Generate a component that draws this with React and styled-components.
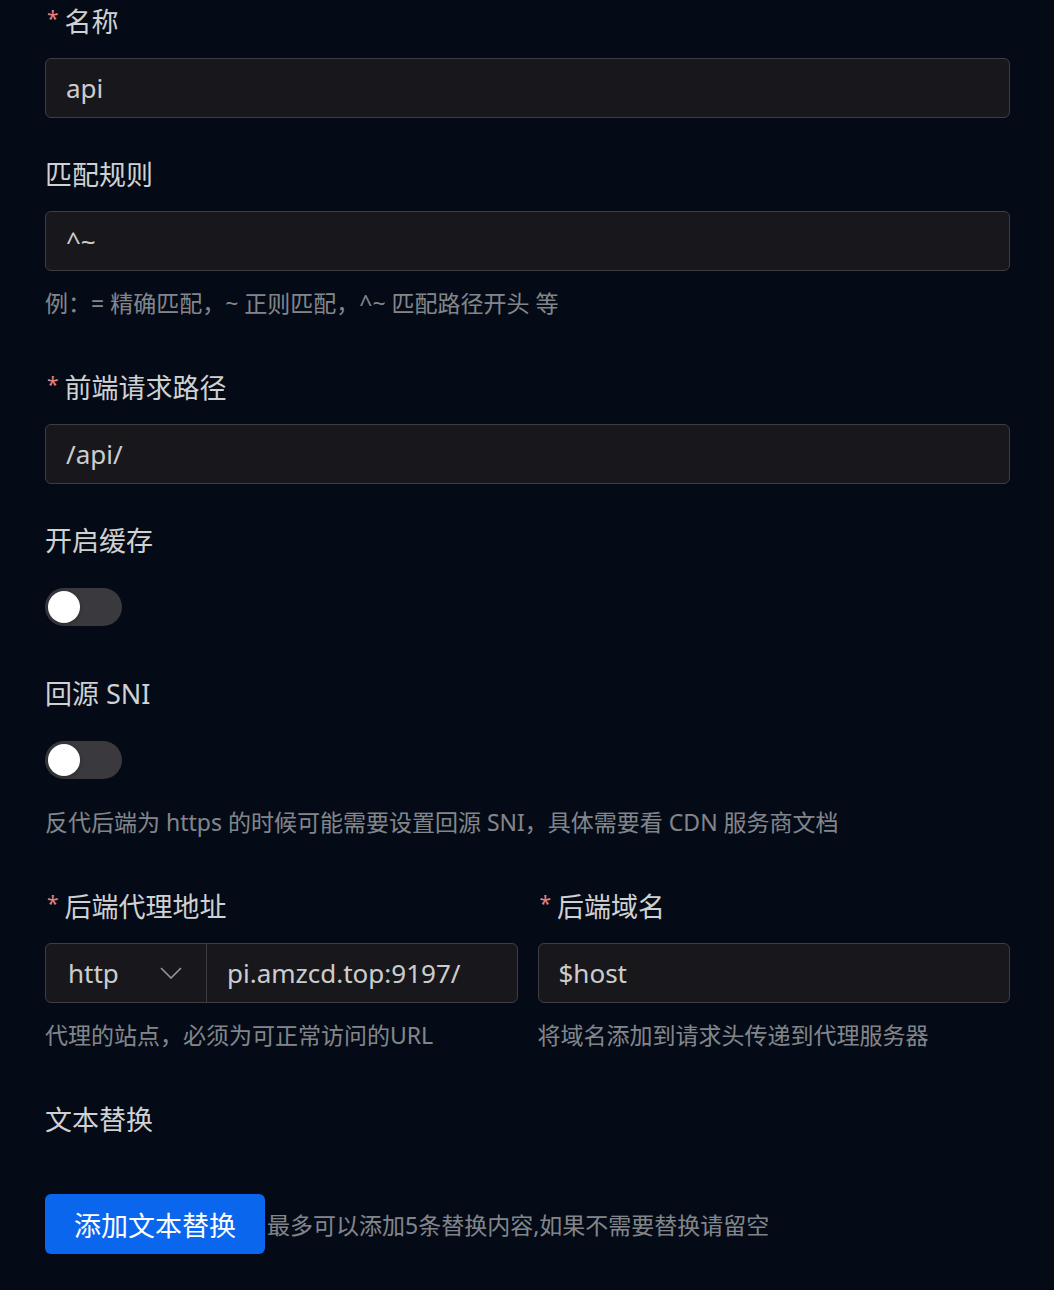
import React from "react";
import styled, { createGlobalStyle } from "styled-components";

const GlobalStyle = createGlobalStyle`
  html, body {
    margin: 0;
    padding: 0;
    background-color: #040b16;
  }

  body {
    font-family: "Noto Sans", "Noto Sans CJK SC", sans-serif;
    color: rgba(255, 255, 255, 0.82);
  }
`;

const Form = styled.form`
  padding: 0 44px 36px 45px;
  min-height: 1290px;
  box-sizing: border-box;
`;

const Row = styled.div`
  display: grid;
  grid-template-columns: 1fr 1fr;
  column-gap: 20px;
`;

const Item = styled.div`
  display: flex;
  flex-direction: column;
`;

const Label = styled.label`
  display: flex;
  align-items: center;
  height: 40px;
  margin-bottom: 18px;
  font-size: 27px;
  color: rgba(255, 255, 255, 0.82);
  white-space: nowrap;

  &::before {
    content: ${(props) => (props.required ? '"*"' : "none")};
    color: #e88080;
    font-size: 21px;
    margin-right: 6px;
    margin-left: 2px;
    align-self: flex-start;
    line-height: 36px;
  }
`;

const Blank = styled.div`
  min-height: 60px;
  display: flex;
  align-items: center;
`;

const Feedback = styled.div`
  box-sizing: border-box;
  min-height: 35px;
  padding: ${(props) => (props.text ? "17px 0 48px" : "0")};
  line-height: 30px;
  font-size: 23px;
  color: rgba(255, 255, 255, 0.52);
  white-space: nowrap;
`;

const InputBox = styled.div`
  flex: 1;
  height: 60px;
  box-sizing: border-box;
  display: flex;
  align-items: center;
  padding: 0 20px;
  background-color: #18181c;
  border: 1px solid #3d3e43;
  border-radius: 6px;
  font-size: 26px;
  color: rgba(255, 255, 255, 0.8);
`;

const Group = styled.div`
  flex: 1;
  display: flex;
  height: 60px;
  box-sizing: border-box;
  background-color: #18181c;
  border: 1px solid #3d3e43;
  border-radius: 6px;
  overflow: hidden;
`;

const SelectPart = styled.div`
  width: 161px;
  box-sizing: border-box;
  display: flex;
  align-items: center;
  justify-content: space-between;
  padding: 0 24px 0 22px;
  border-right: 1px solid #3d3e43;
  font-size: 26px;
  color: rgba(255, 255, 255, 0.8);
`;

const GroupInput = styled.div`
  flex: 1;
  display: flex;
  align-items: center;
  padding: 0 20px;
  font-size: 26px;
  color: rgba(255, 255, 255, 0.8);
`;

const Chevron = styled.svg`
  width: 22px;
  height: 12px;
  fill: none;
  stroke: rgba(255, 255, 255, 0.55);
  stroke-width: 1.6;
`;

const Switch = styled.div`
  width: 77px;
  height: 38px;
  border-radius: 19px;
  background-color: #3a3a3e;
  display: flex;
  align-items: center;
  padding: 0 3px;
  box-sizing: border-box;
  justify-content: ${(props) => (props.on ? "flex-end" : "flex-start")};
`;

const SwitchDot = styled.span`
  width: 32px;
  height: 32px;
  border-radius: 50%;
  background-color: #fff;
  box-shadow: 0 1px 4px rgba(0, 0, 0, 0.3);
`;

const ButtonRow = styled.div`
  display: flex;
  align-items: center;
  margin-top: 38px;
`;

const Button = styled.button`
  height: 60px;
  padding: 0 29px;
  border: none;
  border-radius: 6px;
  background-color: #0b66ee;
  color: #fff;
  font-family: inherit;
  font-size: 27px;
  cursor: pointer;
`;

const Hint = styled.span`
  margin-left: 2px;
  font-size: 23px;
  color: rgba(255, 255, 255, 0.52);
`;

function Field({ label, required, help, children }) {
  return (
    <Item>
      <Label required={required}>{label}</Label>
      <Blank>{children}</Blank>
      <Feedback text={help}>{help}</Feedback>
    </Item>
  );
}

export default function App() {
  return (
    <>
      <GlobalStyle />
      <Form>
        <Field label="名称" required>
          <InputBox>api</InputBox>
        </Field>
        <Field
          label="匹配规则"
          help="例：= 精确匹配，~ 正则匹配，^~ 匹配路径开头 等"
        >
          <InputBox>^~</InputBox>
        </Field>
        <Field label="前端请求路径" required>
          <InputBox>/api/</InputBox>
        </Field>
        <Field label="开启缓存">
          <Switch>
            <SwitchDot />
          </Switch>
        </Field>
        <Field
          label="回源 SNI"
          help="反代后端为 https 的时候可能需要设置回源 SNI，具体需要看 CDN 服务商文档"
        >
          <Switch>
            <SwitchDot />
          </Switch>
        </Field>
        <Row>
          <Field
            label="后端代理地址"
            required
            help="代理的站点，必须为可正常访问的URL"
          >
            <Group>
              <SelectPart>
                http
                <Chevron viewBox="0 0 22 12">
                  <path d="M1 1l10 10 10-10" />
                </Chevron>
              </SelectPart>
              <GroupInput>pi.amzcd.top:9197/</GroupInput>
            </Group>
          </Field>
          <Field
            label="后端域名"
            required
            help="将域名添加到请求头传递到代理服务器"
          >
            <InputBox>$host</InputBox>
          </Field>
        </Row>
        <Item>
          <Label>文本替换</Label>
          <ButtonRow>
            <Button type="button">添加文本替换</Button>
            <Hint>最多可以添加5条替换内容,如果不需要替换请留空</Hint>
          </ButtonRow>
        </Item>
      </Form>
    </>
  );
}
